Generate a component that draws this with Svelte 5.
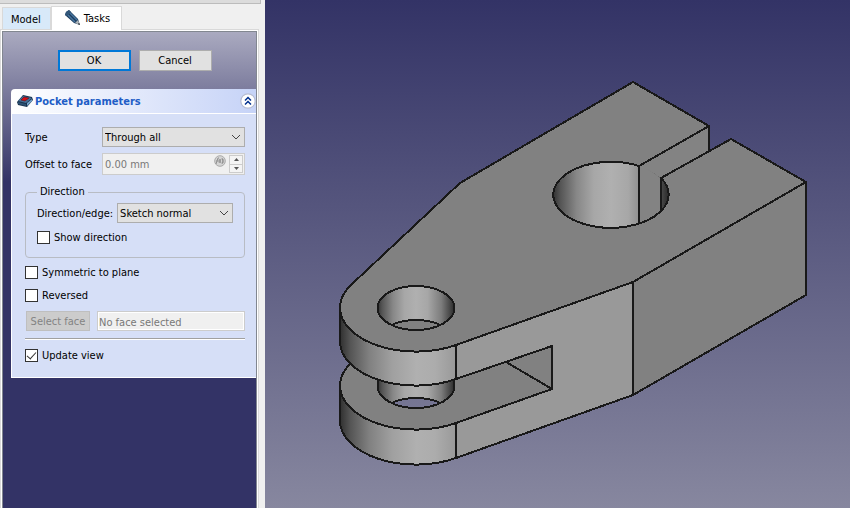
<script lang="ts">
	type Tab = 'model' | 'tasks';

	let activeTab = $state<Tab>('tasks');
	let expanded = $state(true);
	let type = $state('Through all');
	let direction = $state('Sketch normal');
	let showDirection = $state(false);
	let symmetric = $state(false);
	let reversed = $state(false);
	let updateView = $state(true);

	const types = ['Dimension', 'Through all', 'To first', 'Up to face', 'Two dimensions'];
	const directions = ['Sketch normal', 'Select reference...', 'Custom direction'];
</script>

<div class="window">
	<aside class="sidebar">
		<div class="dock-title"></div>
		<div class="tabs" role="tablist">
			<button class="tab" class:active={activeTab === 'model'} role="tab" aria-selected={activeTab === 'model'} onclick={() => (activeTab = 'model')}>
				Model
			</button>
			<button class="tab" class:active={activeTab === 'tasks'} role="tab" aria-selected={activeTab === 'tasks'} onclick={() => (activeTab = 'tasks')}>
				<svg width="16" height="16" viewBox="0 0 16 16" aria-hidden="true">
					<path d="M1 2 L4 0 L13 9 L15 15 L9 13 L0 5 Z" fill="#1d3c5e" />
					<path d="M2 4 L10 12 M4 2 L12 10" stroke="#47759f" stroke-width="1.5" />
					<path d="M1 2 L4 0 L6 2 L2 6 L0 5 Z" fill="#315679" />
					<path d="M13 10 L15 15 L10 13 Z" fill="#aeb4b8" />
					<path d="M14 13 L15 15 L13 14 Z" fill="#111" />
				</svg>
				Tasks
			</button>
		</div>

		<div class="pane">
			<div class="tasks">
				<div class="actions">
					<button class="push default">OK</button>
					<button class="push">Cancel</button>
				</div>

				<section class="card">
					<header class="card-header">
						<svg width="16" height="14" viewBox="0 0 16 14" aria-hidden="true">
							<path d="M0 8 L6 1 L15 3 L16 6 L10 13 L1 11 Z" fill="#17314c" />
							<path d="M1 7 L6 2 L15 4 L9 9 Z" fill="#456f97" />
							<path d="M1 8 L9 10 L9 12 L1 10 Z" fill="#2c4f73" />
							<path d="M10 9 L15 5 L15 7 L10 12 Z" fill="#72a0c8" />
							<path d="M4 6 L7 3 L12 4 L8 7 Z" fill="#d90c12" stroke="#501420" stroke-width="0.6" />
						</svg>
						<h2>Pocket parameters</h2>
						<button class="collapse" aria-label="Toggle pocket parameters" aria-expanded={expanded} onclick={() => (expanded = !expanded)}>
							<svg width="16" height="16" viewBox="0 0 16 16">
								<circle cx="8" cy="8" r="7.2" fill="#fff" stroke="#b7bdd2" stroke-width="1.2" />
								<path d="M5 7.5 L8 4.5 L11 7.5 M5 11.5 L8 8.5 L11 11.5" fill="none" stroke="#00308f" stroke-width="1.5" />
							</svg>
						</button>
					</header>

					{#if expanded}
						<form class="card-body" onsubmit={(e) => e.preventDefault()}>
							<div class="grid">
								<label for="type">Type</label>
								<div class="combo">
									<select id="type" bind:value={type}>
										{#each types as item}
											<option>{item}</option>
										{/each}
									</select>
									<svg class="chevron" width="10" height="6" viewBox="0 0 10 6"><path d="M1 1 L5 5 L9 1" /></svg>
								</div>
								<label for="offset">Offset to face</label>
								<div class="spin">
									<input id="offset" type="text" value="0.00 mm" disabled />
									<svg class="fx" width="12" height="12" viewBox="0 0 12 12" aria-hidden="true">
										<circle cx="6" cy="6" r="5.3" fill="#d5d5d5" stroke="#aaa" />
										<path d="M2 9 L4 3 L5 3 M2 6 H5 M5 8 L7 4 M5 4 L7 8 M8 3 Q10 6 8 9 M9 4 V8" fill="none" stroke="#919191" />
									</svg>
									<div class="steps">
										<button type="button" disabled aria-label="Increase offset"><svg width="5" height="3"><path d="M0 3 L2.5 0 L5 3 Z" /></svg></button>
										<button type="button" disabled aria-label="Decrease offset"><svg width="5" height="3"><path d="M0 0 L2.5 3 L5 0 Z" /></svg></button>
									</div>
								</div>
							</div>

							<fieldset>
								<legend>Direction</legend>
								<div class="edge">
									<label for="direction">Direction/edge:</label>
									<div class="combo">
										<select id="direction" bind:value={direction}>
											{#each directions as item}
												<option>{item}</option>
											{/each}
										</select>
										<svg class="chevron" width="10" height="6" viewBox="0 0 10 6"><path d="M1 1 L5 5 L9 1" /></svg>
									</div>
								</div>
								<label class="check"><input type="checkbox" bind:checked={showDirection} />Show direction</label>
							</fieldset>

							<div class="checks">
								<label class="check"><input type="checkbox" bind:checked={symmetric} />Symmetric to plane</label>
								<label class="check"><input type="checkbox" bind:checked={reversed} />Reversed</label>
							</div>

							<div class="face">
								<button type="button" disabled>Select face</button>
								<input type="text" placeholder="No face selected" aria-label="Face" disabled />
							</div>
							<hr />
							<label class="check"><input type="checkbox" bind:checked={updateView} />Update view</label>
						</form>
					{/if}
				</section>
			</div>
		</div>
	</aside>

	<main class="viewport">
		<svg viewBox="265 0 585 508" role="img" aria-label="Clamp bracket part">
			<defs>
				<linearGradient id="sky" gradientUnits="userSpaceOnUse" x1="0" y1="0" x2="0" y2="508">
					<stop offset="0" stop-color="#333366" />
					<stop offset="1" stop-color="#87879f" />
				</linearGradient>
				<linearGradient id="nose" gradientUnits="userSpaceOnUse" x1="340" y1="0" x2="456" y2="0">
					<stop offset="0" stop-color="#303030" />
					<stop offset="0.09" stop-color="#555" />
					<stop offset="0.25" stop-color="#808080" />
					<stop offset="0.45" stop-color="#a0a0a0" />
					<stop offset="0.66" stop-color="#b0b0b0" />
					<stop offset="0.82" stop-color="#acacac" />
					<stop offset="1" stop-color="#999" />
				</linearGradient>
				<linearGradient id="bore">
					<stop offset="0" stop-color="#333" />
					<stop offset="0.06" stop-color="#555" />
					<stop offset="0.2" stop-color="#878787" />
					<stop offset="0.35" stop-color="#a7a7a7" />
					<stop offset="0.5" stop-color="#b0b0b0" />
					<stop offset="0.65" stop-color="#a7a7a7" />
					<stop offset="0.83" stop-color="#7c7c7c" />
					<stop offset="0.94" stop-color="#484848" />
					<stop offset="1" stop-color="#292929" />
				</linearGradient>
				<clipPath id="lower-hole"><ellipse cx="416" cy="386" rx="38.5" ry="22" /></clipPath>
				<clipPath id="upper-hole"><ellipse cx="416" cy="308" rx="38.5" ry="22" /></clipPath>
				<clipPath id="clamp-hole"><ellipse cx="611" cy="195" rx="57.5" ry="33" /></clipPath>
			</defs>

			<g class="part">
				<!-- lower lug -->
				<path class="face-fill" d="M352 362 A76 44 0 0 0 340 386 A76 44 0 0 0 456 423 L552 389 L506 362 V330 H380 Z" />
				<path fill="url(#nose)" d="M340 386 V420 A76 44 0 0 0 456 458 V423 A76 44 0 0 1 340 386 Z" />
				<path class="edge-line" d="M352 362 A76 44 0 0 0 340 386 V420 A76 44 0 0 0 456 458" />
				<path class="edge-line" d="M340 386 A76 44 0 0 0 456 423" />
				<ellipse cx="416" cy="386" rx="38.5" ry="22" fill="url(#bore)" />
				<g clip-path="url(#lower-hole)">
					<ellipse class="edge-line sky" cx="416" cy="420" rx="38.5" ry="22" />
				</g>
				<ellipse class="edge-line" cx="416" cy="386" rx="38.5" ry="22" />

				<!-- front face and slot end -->
				<path class="front-fill" d="M456 345 L633 282 V395 L456 458 V423 L552 389 V346 L456 379 Z" />
				<path class="face-fill" d="M506 362 L552 346 V389 Z" />
				<path class="edge-line" d="M456 458 L633 395 V282 M456 379 L552 346 V389 L456 423 V458 M506 362 L552 389" />

				<!-- upper lug -->
				<path fill="url(#nose)" d="M340 308 V342 A76 44 0 0 0 456 379 V345 Z" />
				<path class="edge-line" d="M340 308 V342 A76 44 0 0 0 456 379 V345" />

				<!-- clamp end -->
				<path class="face-fill" d="M633 282 L806 182 V295 L633 395 Z" />
				<path class="edge-line" d="M806 182 V295 L633 395 V282" />
				<path class="slot-fill" d="M639 166 L709 126 V151 L661 178 V230 H639 Z" />

				<!-- top face -->
				<path class="face-fill" d="M460 183 L633 82 L709 126 L639 166 L650 195 L661 178 L731 139 L806 182 L633 282 L456 345 A76 44 0 0 1 340 308 A76 44 0 0 1 352 284 Z" />
				<path class="edge-line" d="M709 151 V126 L633 82 L460 183 L352 284 A76 44 0 0 0 340 308 A76 44 0 0 0 456 345 L633 282 L806 182 L731 139 L661 178" />

				<ellipse cx="416" cy="308" rx="38.5" ry="22" fill="url(#bore)" />
				<g clip-path="url(#upper-hole)">
					<ellipse class="edge-line floor" cx="416" cy="342" rx="38.5" ry="22" />
				</g>
				<ellipse class="edge-line" cx="416" cy="308" rx="38.5" ry="22" />

				<ellipse cx="611" cy="195" rx="57.5" ry="33" fill="url(#bore)" />
				<g clip-path="url(#clamp-hole)">
					<rect class="slot-fill" x="639" y="160" width="22" height="70" />
				</g>
				<path class="edge-line" d="M639 166 A57.5 33 0 1 0 661 211 A57.5 33 0 0 0 661 178 V211 M639 166 V223 M639 166 L709 126" />
			</g>
		</svg>
	</main>
</div>

<style>
	:global(body) {
		margin: 0;
	}

	.window {
		display: flex;
		height: 100vh;
		background: #f0f0f0;
		color: #000;
		font: 11px/14px 'DejaVu Sans Condensed', 'DejaVu Sans', Tahoma, sans-serif;
	}

	.window * {
		box-sizing: border-box;
	}

	button,
	input,
	select {
		margin: 0;
		font: inherit;
		color: inherit;
	}

	.sidebar {
		display: flex;
		flex-direction: column;
		flex: 0 0 265px;
		min-width: 0;
		padding-right: 6px;
	}

	.dock-title {
		height: 4px;
		margin-right: -2px;
		background: #dcdcdc;
		border: 1px solid #bcbcbc;
		border-width: 0 1px 1px 0;
	}

	/* Tabs */
	.tabs {
		display: flex;
		align-items: flex-end;
		padding: 2px 0 0 2px;
	}

	.tab {
		display: flex;
		align-items: center;
		justify-content: center;
		gap: 3px;
		height: 22px;
		padding: 2px 9px 0 8px;
		background: #d8e9f9;
		border: 1px solid #d9d9d9;
		border-bottom: none;
	}

	.tab.active {
		height: 24px;
		margin-bottom: -1px;
		padding: 0 11px 0 13px;
		background: #fff;
		z-index: 1;
	}

	.tab svg {
		margin-bottom: 2px;
	}

	.pane {
		flex: 1;
		display: flex;
		padding: 1px 1px 0;
		background: #fff;
		border: 1px solid #d9d9d9;
		border-bottom: none;
	}

	.tasks {
		flex: 1;
		min-width: 0;
		padding: 18px 0 0 8px;
		border: 1px solid #828790;
		border-bottom: none;
		background: linear-gradient(#aaaac0, #333366 150px);
	}

	.actions {
		display: flex;
		justify-content: center;
		gap: 8px;
		margin: 0 0 18px 2px;
	}

	.push {
		width: 73px;
		height: 21px;
		padding: 1px 0 0;
		background: #e1e1e1;
		border: 1px solid #adadad;
	}

	.push.default {
		border: 2px solid #0078d7;
	}

	/* Task card */
	.card-header {
		display: flex;
		align-items: center;
		gap: 2px;
		height: 24px;
		padding: 0 0 0 6px;
		border-radius: 4px 0 0 0;
		background: linear-gradient(90deg, #fff, #c6d3f7);
	}

	h2 {
		flex: 1;
		margin: 0;
		padding-top: 2px;
		font: bold 11px/14px 'DejaVu Sans Condensed', 'DejaVu Sans', Verdana, sans-serif;
		color: #215dc6;
	}

	.collapse {
		display: flex;
		padding: 0;
		background: none;
		border: none;
	}

	.card-body {
		padding: 13px 11px 15px 13px;
		background: #d6dff7;
		border: 1px solid #fff;
		border-right: none;
	}

	.grid {
		display: grid;
		grid-template-columns: 71px minmax(0, 1fr);
		gap: 6px;
		align-items: center;
	}

	.grid label,
	.edge label {
		padding-top: 2px;
	}

	.combo {
		position: relative;
		display: flex;
		flex: 1;
		min-width: 0;
	}

	select {
		appearance: none;
		width: 100%;
		height: 20px;
		padding: 2px 20px 0 2px;
		background: #e1e1e1;
		border: 1px solid #adadad;
		border-radius: 0;
	}

	.chevron {
		position: absolute;
		right: 4px;
		top: 7px;
		fill: none;
		stroke: #444;
		pointer-events: none;
	}

	.spin {
		display: flex;
		height: 22px;
		padding: 1px;
		background: #f0f0f0;
		border: 1px solid #ccc;
	}

	.spin input {
		flex: 1;
		min-width: 0;
		padding: 2px 1px 0;
		background: none;
		border: none;
		color: #787878;
	}

	.steps {
		display: flex;
		flex-direction: column;
		width: 14px;
		margin-left: 3px;
	}

	.steps button {
		flex: 1;
		display: flex;
		align-items: center;
		justify-content: center;
		padding: 0;
		background: #f4f4f4;
		border: 1px solid #ccc;
	}

	.steps button + button {
		border-top: none;
	}

	.steps path {
		fill: #555;
	}

	fieldset {
		min-width: 0;
		margin: 10px 0 8px;
		padding: 4px 11px 13px;
		border: 1px solid #b8bcc4;
		border-radius: 4px;
	}

	legend {
		padding: 0 3px;
	}

	.edge {
		display: flex;
		align-items: center;
		gap: 4px;
		margin-bottom: 8px;
	}

	.check {
		display: flex;
		align-items: center;
		gap: 4px;
		height: 13px;
	}

	.check input {
		appearance: none;
		display: flex;
		align-items: center;
		justify-content: center;
		width: 13px;
		height: 13px;
		background: #fff;
		border: 1px solid #333;
	}

	.check input:checked::after {
		content: '';
		width: 4px;
		height: 8px;
		margin-bottom: 3px;
		border: solid #333;
		border-width: 0 1px 1px 0;
		transform: rotate(42deg);
	}

	.checks {
		display: grid;
		gap: 10px;
	}

	.face {
		display: flex;
		gap: 7px;
		margin: 9px 0 7px 1px;
	}

	.face button {
		width: 64px;
		height: 20px;
		padding: 1px 0 0;
		background: #ccc;
		border: 1px solid #bfbfbf;
		color: #838383;
	}

	.face input {
		flex: 1;
		min-width: 0;
		height: 20px;
		padding: 2px 1px 0;
		background: #f0f0f0;
		border: 1px solid #ccc;
		box-shadow: inset 0 0 0 1px #fff;
	}

	.face input::placeholder {
		color: #787878;
		opacity: 1;
	}

	hr {
		height: 2px;
		margin: 0 0 9px;
		border: solid;
		border-width: 1px 0;
		border-color: #a0a0a0 transparent #fff;
	}

	/* 3D view */
	.viewport {
		flex: 1;
		min-width: 0;
		background: linear-gradient(#333366, #87879f);
	}

	.viewport svg {
		display: block;
		width: 100%;
		height: 100%;
	}

	.part {
		shape-rendering: crispEdges;
	}

	.face-fill {
		fill: #818181;
	}

	.front-fill {
		fill: #999;
	}

	.slot-fill {
		fill: #838383;
	}

	.edge-line {
		fill: none;
		stroke: #191919;
		stroke-width: 2;
		stroke-linejoin: round;
	}

	.edge-line.sky {
		fill: url(#sky);
	}

	.edge-line.floor {
		fill: #818181;
	}
</style>
